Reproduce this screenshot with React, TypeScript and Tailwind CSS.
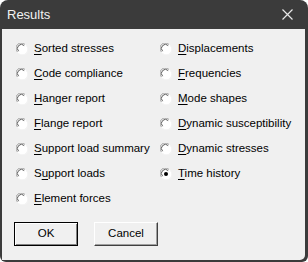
import React, { useState } from 'react';

const left = [
  { pre: '', key: 'S', post: 'orted stresses' },
  { pre: '', key: 'C', post: 'ode compliance' },
  { pre: '', key: 'H', post: 'anger report' },
  { pre: '', key: 'F', post: 'lange report' },
  { pre: '', key: 'S', post: 'upport load summary' },
  { pre: 'S', key: 'u', post: 'pport loads' },
  { pre: '', key: 'E', post: 'lement forces' },
];

const right = [
  { pre: '', key: 'D', post: 'isplacements' },
  { pre: '', key: 'F', post: 'requencies' },
  { pre: '', key: 'M', post: 'ode shapes' },
  { pre: '', key: 'D', post: 'ynamic susceptibility' },
  { pre: '', key: 'D', post: 'ynamic stresses' },
  { pre: '', key: 'T', post: 'ime history' },
];

const Radio = ({ checked }: { checked: boolean }) => (
  <svg width="12" height="12" viewBox="0 0 12 12" className="shrink-0">
    <circle cx="6" cy="6" r="5.5" fill="#ffffff" />
    <path d="M1.5 9 A5 5 0 0 1 9 1.5" fill="none" stroke="#a0a0a0" strokeWidth="1" />
    <path d="M2.6 8.2 A3.9 3.9 0 0 1 8.2 2.6" fill="none" stroke="#5a5a5a" strokeWidth="1" />
    <path d="M10.5 3 A5 5 0 0 1 3 10.5" fill="none" stroke="#f4f4f4" strokeWidth="1" />
    {checked && <circle cx="6" cy="6" r="2" fill="#000000" />}
  </svg>
);

type Item = { pre: string; key: string; post: string };

const Option = ({ item, checked, onClick }: { item: Item; checked: boolean; onClick: () => void }) => (
  <div className="flex items-center h-[25px] gap-[6px] cursor-default" onClick={onClick}>
    <Radio checked={checked} />
    <span className="text-[11.5px] text-black whitespace-nowrap">
      {item.pre}
      <span className="underline underline-offset-2">{item.key}</span>
      {item.post}
    </span>
  </div>
);

const App: React.FC = () => {
  const [selected, setSelected] = useState('R5');

  return (
    <div
      className="w-[308px] h-[262px] bg-[#3b3b3b] rounded-t-[8px] rounded-b-[6px] flex flex-col pl-[2px] pr-[3px] pb-[2px]"
      style={{ fontFamily: '"Liberation Sans", Arial, sans-serif' }}
    >
      <div className="h-[29px] flex items-center justify-between pl-[5px] pr-[12px]">
        <span className="text-[13px] text-[#f2f2f2]">Results</span>
        <svg width="11" height="11" viewBox="0 0 11 11">
          <path d="M0.5 0.5 L10.5 10.5 M10.5 0.5 L0.5 10.5" stroke="#e8e8e8" strokeWidth="1.2" />
        </svg>
      </div>
      <div className="flex-1 bg-[#f0f0f0] rounded-br-[5px] flex flex-col pt-[7px] pl-[14px]">
        <div className="flex">
          <div className="w-[144px] flex flex-col">
            {left.map((it, i) => (
              <Option key={i} item={it} checked={selected === 'L' + i} onClick={() => setSelected('L' + i)} />
            ))}
          </div>
          <div className="flex flex-col">
            {right.map((it, i) => (
              <Option key={i} item={it} checked={selected === 'R' + i} onClick={() => setSelected('R' + i)} />
            ))}
          </div>
        </div>
        <div className="flex gap-[16px] mt-[11px] ml-[-2px]">
          <button className="w-[64px] h-[24px] bg-[#f0f0f0] border border-black shadow-[inset_1px_1px_0_#ffffff,inset_-1px_-1px_0_#808080] text-[11.5px] text-black">
            OK
          </button>
          <button className="w-[64px] h-[24px] bg-[#f0f0f0] border-t border-l border-white border-r border-b border-r-[#404040] border-b-[#404040] shadow-[inset_-1px_-1px_0_#a0a0a0] text-[11.5px] text-black">
            Cancel
          </button>
        </div>
      </div>
    </div>
  );
};

export default App;
